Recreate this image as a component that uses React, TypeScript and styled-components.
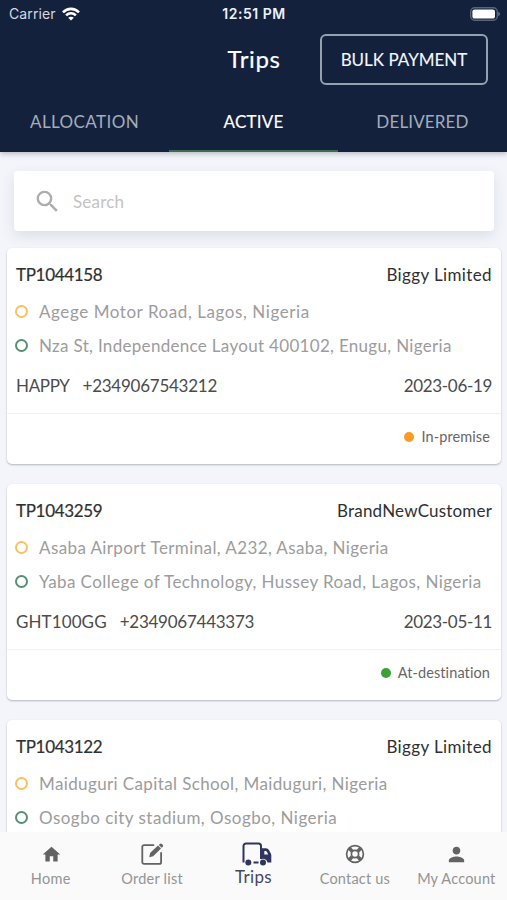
import React from 'react';
import styled, { createGlobalStyle } from 'styled-components';
import { MdHome, MdPerson, MdSearch } from 'react-icons/md';

const Global = createGlobalStyle`
  * { box-sizing: border-box; }
  body { margin: 0; background: #f3f5fa; font-family: Lato, "Liberation Sans", sans-serif; }
`;

const Screen = styled.div`
  width: 507px;
  height: 900px;
  overflow: hidden;
  display: flex;
  flex-direction: column;
  background: #f3f5fa;
`;

const Header = styled.header`
  flex: none;
  height: 152px;
  background: #14213d;
  color: #fff;
  display: flex;
  flex-direction: column;
  box-shadow: 0 2px 5px rgba(40, 44, 52, 0.28);
  z-index: 1;
`;

const StatusBar = styled.div`
  height: 27px;
  display: grid;
  grid-template-columns: 1fr auto 1fr;
  align-items: center;
  padding: 0 7px 0 9px;
  font-family: Inter, "Liberation Sans", sans-serif;
  font-size: 14px;
  line-height: 18px;
`;

const Carrier = styled.div`
  display: flex;
  align-items: center;
  gap: 6px;
  color: #d4dae3;
  letter-spacing: 0.1px;
`;

const Clock = styled.div`
  font-weight: 600;
  font-size: 14px;
  color: #edf1f6;
  letter-spacing: 0.5px;
  margin-right: 1px;
`;

const BatterySlot = styled.div`
  display: flex;
  justify-content: flex-end;
`;

const TitleRow = styled.div`
  height: 65px;
  display: grid;
  grid-template-columns: 1fr auto 1fr;
  align-items: center;
  padding-right: 19px;
  padding-left: 20px;
`;

const Title = styled.h1`
  margin: 0 0 2px;
  font-size: 24px;
  font-weight: 400;
  -webkit-text-stroke: 0.2px currentColor;
  line-height: 30px;
  letter-spacing: 0.6px;
`;

const BulkButton = styled.button`
  justify-self: end;
  width: 168px;
  height: 51px;
  padding: 0;
  border: 2px solid #95a0b0;
  border-radius: 6px;
  background: transparent;
  color: #f3f6fa;
  font: 400 17px Lato, sans-serif;
  -webkit-text-stroke: 0.12px currentColor;
  white-space: nowrap;
`;

const Tabs = styled.nav`
  height: 60px;
  display: grid;
  grid-template-columns: repeat(3, 1fr);
`;

const Tab = styled.div<{ $active?: boolean; $track: number }>`
  display: flex;
  align-items: center;
  justify-content: center;
  padding-top: 2px;
  font-size: 17px;
  line-height: 22px;
  letter-spacing: ${p => p.$track}px;
  border-bottom: 2px solid ${p => (p.$active ? '#3d6b50' : 'transparent')};
  color: ${p => (p.$active ? '#fff' : '#a3adbc')};
  -webkit-text-stroke: ${p => (p.$active ? '0.15px' : '0')} currentColor;
`;

const Content = styled.main`
  flex: 1;
  min-height: 0;
  overflow: hidden;
  padding: 19px 6px 0 7px;
`;

const SearchBox = styled.div`
  height: 60px;
  margin: 0 7px 17px;
  padding-left: 18.5px;
  display: flex;
  align-items: center;
  gap: 11.5px;
  background: #fff;
  border-radius: 4px;
  box-shadow: 0 5px 14px rgba(50, 65, 100, 0.12);
  color: #adadad;
`;

const Placeholder = styled.span`
  font-size: 17px;
  color: #c3c3c3;
  letter-spacing: 0.2px;
  line-height: 22px;
  padding-top: 1px;
`;

const Card = styled.article`
  height: 216px;
  margin-bottom: 20px;
  padding-top: 4px;
  background: #fff;
  border-radius: 5px;
  box-shadow: 0 1px 2px rgba(30, 35, 50, 0.3);
`;

const SplitRow = styled.div<{ $color: string }>`
  height: 46px;
  padding: 0 9px;
  display: flex;
  align-items: center;
  justify-content: space-between;
  font-size: 17px;
  line-height: 22px;
  color: ${p => p.$color};
`;

const Text = styled.span<{ $track?: number; $stroke?: number }>`
  letter-spacing: ${p => p.$track ?? 0}px;
  -webkit-text-stroke: ${p => p.$stroke ?? 0}px currentColor;
  white-space: pre;
`;

const Driver = styled.div`
  display: flex;
  gap: 13px;
`;

const Stops = styled.div`
  margin-top: -3px;
`;

const Address = styled.div`
  height: 34px;
  padding: 0 9px 0 8px;
  display: flex;
  align-items: center;
  gap: 11px;
  font-size: 17px;
  line-height: 22px;
  color: #9c9c9c;
`;

const Ring = styled.i<{ $color: string }>`
  flex: none;
  width: 13px;
  height: 13px;
  margin-bottom: 1px;
  border: 2px solid ${p => p.$color};
  border-radius: 50%;
`;

const CardFooter = styled.div`
  height: 50px;
  margin-top: 4px;
  padding: 0 11px 3px 0;
  border-top: 1px solid #f2f2f4;
  display: flex;
  align-items: center;
  justify-content: flex-end;
  gap: 7px;
  font-size: 14.5px;
  line-height: 20px;
  color: #666;
`;

const Dot = styled.i<{ $color: string }>`
  width: 10px;
  height: 10px;
  border-radius: 50%;
  background: ${p => p.$color};
`;

const BottomNav = styled.nav`
  flex: none;
  height: 68px;
  background: #fafafa;
  display: grid;
  grid-template-columns: repeat(5, 1fr);
  z-index: 1;
`;

const NavItem = styled.div<{ $active?: boolean; $track: number }>`
  display: flex;
  flex-direction: column;
  align-items: center;
  padding-top: 9px;
  color: ${p => (p.$active ? '#2f355c' : '#636363')};
  white-space: nowrap;
  span {
    font-size: ${p => (p.$active ? 17 : 14.5)}px;
    line-height: 20px;
    margin-top: ${p => (p.$active ? 0 : 2)}px;
    letter-spacing: ${p => p.$track}px;
    color: ${p => (p.$active ? '#44485f' : '#949494')};
  }
`;

const IconSlot = styled.div<{ $shift?: number }>`
  height: 26px;
  display: flex;
  align-items: center;
  padding-left: ${p => p.$shift ?? 0}px;
`;

const WifiIcon = () => (
  <svg width="18" height="14" viewBox="0 0 18 14" fill="none" stroke="#fff" strokeWidth="2.6">
    <path d="M1 5.3C5.5.7 12.5.7 17 5.3" />
    <path d="M4.1 8.4c2.8-2.8 7-2.8 9.8 0" />
    <path d="M9 13.6 6.2 10.8c1.6-1.5 4-1.5 5.6 0z" fill="#fff" stroke="none" />
  </svg>
);

const BatteryIcon = () => (
  <svg width="30" height="14" viewBox="0 0 30 14">
    <rect x=".7" y=".7" width="26.6" height="12.6" rx="4" fill="none" stroke="#59637a" strokeWidth="1.4" />
    <rect x="2.4" y="2.4" width="22.6" height="9.2" rx="2.2" fill="#fff" />
    <path d="M28.4 4.8c1.8.8 1.8 3.6 0 4.4z" fill="#7d8595" />
  </svg>
);

const EditIcon = () => (
  <svg width="24" height="24" viewBox="0 0 24 24" fill="none" stroke="currentColor" strokeWidth="1.8">
    <path
      d="M13.5 3.1H4A1.7 1.7 0 0 0 2.3 4.8v15.4A1.7 1.7 0 0 0 4 21.9h15.4a1.7 1.7 0 0 0 1.7-1.7V11"
      strokeLinecap="round"
    />
    <path d="m9.300 15.200.8-4.200L18 3.500l3 3-7.800 7.800z" fill="currentColor" stroke="none" />
    <path d="m18.800 2.900 1-1a1.400 1.400 0 0 1 2 0l.9.9a1.400 1.400 0 0 1 0 2l-1 1z" fill="currentColor" stroke="none" />
  </svg>
);

const TruckIcon = () => (
  <svg width="30" height="24" viewBox="0 0 30 24" fill="none" stroke="currentColor" strokeWidth="2">
    <path d="M1.5 20.5V4A2.500 2.500 0 0 1 4 1.500H16.500A2.500 2.500 0 0 1 19 4V17" />
    <path
      d="M19 6.200H24C25.200 6.200 26.300 6.900 26.900 8L28.700 11.300C29.100 12 29.300 12.700 29.300 13.500V20.500H25.500A4.500 4.500 0 0 0 19 17.300ZM22.300 9V12.500H26.200L25 9.900C24.700 9.300 24.200 9 23.600 9Z"
      fill="currentColor"
      fillRule="evenodd"
      stroke="none"
    />
    <path d="M11.500 20.500H16.500" />
    <circle cx="6.300" cy="20.500" r="3" fill="currentColor" stroke="none" />
    <circle cx="21" cy="20.500" r="3" fill="currentColor" stroke="none" />
  </svg>
);

const HelpIcon = () => (
  <svg width="20" height="20" viewBox="0 0 20 20" fill="none" stroke="currentColor">
    <circle cx="10" cy="10" r="8.4" strokeWidth="1.7" />
    <circle cx="10" cy="10" r="3.6" strokeWidth="1.7" />
    <path d="m3.800 3.800 3.400 3.400M16.200 3.800l-3.400 3.400M3.800 16.200l3.400-3.400M16.200 16.200l-3.400-3.400" strokeWidth="3.6" />
  </svg>
);

interface Line {
  text: string;
  track: number;
}

interface Trip {
  id: string;
  customer: Line;
  from: Line;
  to: Line;
  delivery?: {
    driver: Line;
    phone: string;
    date: string;
    status: Line;
    statusColor: string;
  };
}

const trips: Trip[] = [
  {
    id: 'TP1044158',
    customer: { text: 'Biggy Limited', track: 0.38 },
    from: { text: 'Agege Motor Road, Lagos, Nigeria', track: 0.57 },
    to: { text: 'Nza St, Independence Layout 400102, Enugu, Nigeria', track: 0.31 },
    delivery: {
      driver: { text: 'HAPPY', track: -0.35 },
      phone: '+2349067543212',
      date: '2023-06-19',
      status: { text: 'In-premise', track: 0.1 },
      statusColor: '#fb9a24',
    },
  },
  {
    id: 'TP1043259',
    customer: { text: 'BrandNewCustomer', track: 0.18 },
    from: { text: 'Asaba Airport Terminal, A232, Asaba, Nigeria', track: 0.39 },
    to: { text: 'Yaba College of Technology, Hussey Road, Lagos, Nigeria', track: 0.42 },
    delivery: {
      driver: { text: 'GHT100GG', track: 0.1 },
      phone: '+2349067443373',
      date: '2023-05-11',
      status: { text: 'At-destination', track: 0.1 },
      statusColor: '#3da035',
    },
  },
  {
    id: 'TP1043122',
    customer: { text: 'Biggy Limited', track: 0.38 },
    from: { text: 'Maiduguri Capital School, Maiduguri, Nigeria', track: 0.38 },
    to: { text: 'Osogbo city stadium, Osogbo, Nigeria', track: 0.48 },
  },
];

const TripCard = ({ trip }: { trip: Trip }) => (
  <Card>
    <SplitRow $color="#303030">
      <Text $stroke={0.2} $track={-0.32}>{trip.id}</Text>
      <Text $track={trip.customer.track}>{trip.customer.text}</Text>
    </SplitRow>
    <Stops>
      <Address>
        <Ring $color="#f9c261" />
        <Text $track={trip.from.track}>{trip.from.text}</Text>
      </Address>
      <Address>
        <Ring $color="#568f74" />
        <Text $track={trip.to.track}>{trip.to.text}</Text>
      </Address>
    </Stops>
    {trip.delivery && (
      <>
        <SplitRow $color="#4b4b4b">
          <Driver>
            <Text $track={trip.delivery.driver.track}>{trip.delivery.driver.text}</Text>
            <Text $track={-0.25}>{trip.delivery.phone}</Text>
          </Driver>
          <Text $track={-0.32}>{trip.delivery.date}</Text>
        </SplitRow>
        <CardFooter>
          <Dot $color={trip.delivery.statusColor} />
          <Text $track={trip.delivery.status.track}>{trip.delivery.status.text}</Text>
        </CardFooter>
      </>
    )}
  </Card>
);

export default function App() {
  return (
    <>
      <Global />
      <Screen>
        <Header>
          <StatusBar>
            <Carrier>
              Carrier <WifiIcon />
            </Carrier>
            <Clock>12:51 PM</Clock>
            <BatterySlot>
              <BatteryIcon />
            </BatterySlot>
          </StatusBar>
          <TitleRow>
            <span />
            <Title>Trips</Title>
            <BulkButton>BULK PAYMENT</BulkButton>
          </TitleRow>
          <Tabs>
            <Tab $track={0.4}>ALLOCATION</Tab>
            <Tab $active $track={0.2}>ACTIVE</Tab>
            <Tab $track={0.15}>DELIVERED</Tab>
          </Tabs>
        </Header>
        <Content>
          <SearchBox>
            <MdSearch size={29} />
            <Placeholder>Search</Placeholder>
          </SearchBox>
          {trips.map(trip => (
            <TripCard key={trip.id} trip={trip} />
          ))}
        </Content>
        <BottomNav>
          <NavItem $track={0.3}>
            <IconSlot $shift={2}><MdHome size={21} /></IconSlot>
            <span>Home</span>
          </NavItem>
          <NavItem $track={0.25}>
            <IconSlot><EditIcon /></IconSlot>
            <span>Order list</span>
          </NavItem>
          <NavItem $active $track={0.3}>
            <IconSlot $shift={8}><TruckIcon /></IconSlot>
            <span>Trips</span>
          </NavItem>
          <NavItem $track={0.2}>
            <IconSlot><HelpIcon /></IconSlot>
            <span>Contact us</span>
          </NavItem>
          <NavItem $track={0.2}>
            <IconSlot><MdPerson size={23} /></IconSlot>
            <span>My Account</span>
          </NavItem>
        </BottomNav>
      </Screen>
    </>
  );
}
